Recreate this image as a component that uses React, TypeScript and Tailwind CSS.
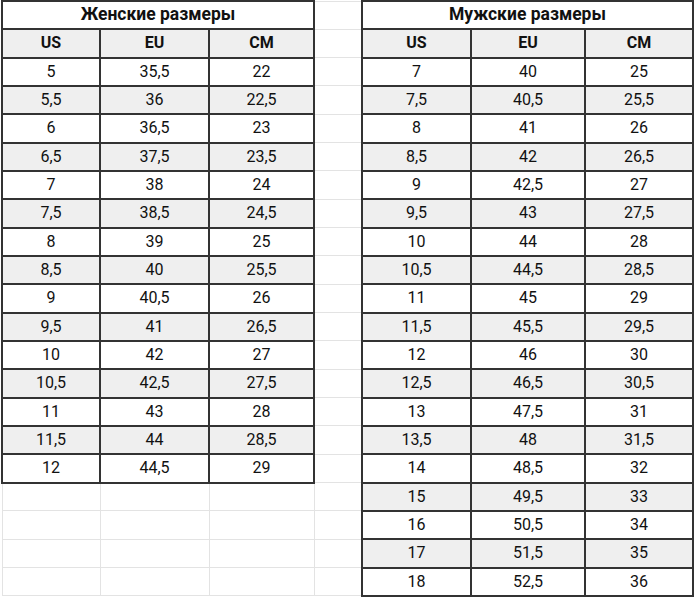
import React from 'react';

const women: string[][] = [
  ['5', '35,5', '22'],
  ['5,5', '36', '22,5'],
  ['6', '36,5', '23'],
  ['6,5', '37,5', '23,5'],
  ['7', '38', '24'],
  ['7,5', '38,5', '24,5'],
  ['8', '39', '25'],
  ['8,5', '40', '25,5'],
  ['9', '40,5', '26'],
  ['9,5', '41', '26,5'],
  ['10', '42', '27'],
  ['10,5', '42,5', '27,5'],
  ['11', '43', '28'],
  ['11,5', '44', '28,5'],
  ['12', '44,5', '29'],
];

const men: string[][] = [
  ['7', '40', '25'],
  ['7,5', '40,5', '25,5'],
  ['8', '41', '26'],
  ['8,5', '42', '26,5'],
  ['9', '42,5', '27'],
  ['9,5', '43', '27,5'],
  ['10', '44', '28'],
  ['10,5', '44,5', '28,5'],
  ['11', '45', '29'],
  ['11,5', '45,5', '29,5'],
  ['12', '46', '30'],
  ['12,5', '46,5', '30,5'],
  ['13', '47,5', '31'],
  ['13,5', '48', '31,5'],
  ['14', '48,5', '32'],
  ['15', '49,5', '33'],
  ['16', '50,5', '34'],
  ['17', '51,5', '35'],
  ['18', '52,5', '36'],
];

const dark = 'border-2 border-[#333]';
const faint = 'border border-[#e3e3e3]';

function DataCells({ row, index }: { row?: string[]; index: number }) {
  if (!row) {
    return (
      <>
        <td className={faint} />
        <td className={faint} />
        <td className={faint} />
      </>
    );
  }
  const bg = index % 2 === 1 ? 'bg-[#efefef]' : 'bg-white';
  return (
    <>
      {row.map((v, i) => (
        <td key={i} className={`${dark} ${bg} text-center`}>
          {v}
        </td>
      ))}
    </>
  );
}

export default function App() {
  const rows = Array.from({ length: 19 }, (_, i) => i);

  return (
    <div className="w-[695px] h-[599px] bg-white overflow-hidden pl-px">
      <table
        className="table-fixed border-collapse text-[16px] text-[#111] leading-none"
        style={{ fontFamily: 'Roboto, "Liberation Sans", sans-serif' }}
      >
        <colgroup>
          <col className="w-[98px]" />
          <col className="w-[109px]" />
          <col className="w-[105px]" />
          <col className="w-[48px]" />
          <col className="w-[109px]" />
          <col className="w-[114px]" />
          <col className="w-[108px]" />
        </colgroup>
        <tbody>
          <tr className="h-[28.33px]">
            <td colSpan={3} className={`${dark} bg-white text-center font-bold text-[17.5px]`}>
              Женские размеры
            </td>
            <td className={faint} />
            <td colSpan={3} className={`${dark} bg-white text-center font-bold text-[17.5px]`}>
              Мужские размеры
            </td>
          </tr>
          <tr className="h-[28.33px]">
            {['US', 'EU', 'CM'].map((h) => (
              <td key={'w' + h} className={`${dark} bg-[#efefef] text-center font-bold`}>
                {h}
              </td>
            ))}
            <td className={faint} />
            {['US', 'EU', 'CM'].map((h) => (
              <td key={'m' + h} className={`${dark} bg-[#efefef] text-center font-bold`}>
                {h}
              </td>
            ))}
          </tr>
          {rows.map((i) => (
            <tr key={i} className="h-[28.33px]">
              <DataCells row={women[i]} index={i} />
              <td className={faint} />
              <DataCells row={men[i]} index={i} />
            </tr>
          ))}
        </tbody>
      </table>
    </div>
  );
}
